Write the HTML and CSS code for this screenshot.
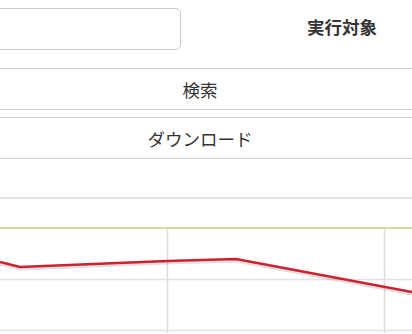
FILE: index.html
```html
<!DOCTYPE html>
<html lang="ja">
<head>
<meta charset="utf-8">
<link rel="stylesheet" href="styles.css">
</head>
<body>
<div class="page">
  <div class="row-top">
    <div class="input-wrap"><input class="text-input" type="text"></div>
    <div class="label">実行対象</div>
  </div>
  <div class="btn btn-search">検索</div>
  <div class="btn btn-download">ダウンロード</div>
  <div class="spacer"></div>
  <div class="spacer2"></div>
  <div class="chart">
    <svg width="412" height="106" viewBox="0 0 412 106">
      <line x1="0" y1="1" x2="412" y2="1" stroke="#d8d8a2" stroke-width="2"/>
      <line x1="0" y1="52.5" x2="412" y2="52.5" stroke="#e2e2e2" stroke-width="1.5"/>
      <line x1="0" y1="103.5" x2="412" y2="103.5" stroke="#e2e2e2" stroke-width="1.5"/>
      <line x1="167.5" y1="2" x2="167.5" y2="106" stroke="#dcdcdc" stroke-width="1.5"/>
      <line x1="384.5" y1="2" x2="384.5" y2="106" stroke="#dcdcdc" stroke-width="1.5"/>
      <polyline points="0,37 20,42 167,36 236,34 412,67" fill="none" stroke="rgba(0,0,0,0.12)" stroke-width="3"/>
      <polyline points="0,35 20,40 167,34 236,32 412,65" fill="none" stroke="#d0202f" stroke-width="2.5"/>
    </svg>
  </div>
</div>
</body>
</html>
```
FILE: styles.css
```css
html, body {
  margin: 0;
  padding: 0;
  background: #fff;
}
.page {
  width: 412px;
  height: 334px;
  overflow: hidden;
  font-family: "Noto Sans CJK JP", "Noto Sans", sans-serif;
  color: #333;
}
.row-top {
  display: flex;
  align-items: flex-start;
  height: 68px;
  border-bottom: 1px solid #cfcfcf;
}
.input-wrap {
  width: 181px;
  padding-top: 8px;
  overflow: visible;
}
.text-input {
  display: block;
  box-sizing: border-box;
  margin-left: -20px;
  width: 201px;
  height: 42px;
  border: 1px solid #cccccc;
  border-radius: 5px;
  background: #fff;
  outline: none;
}
.label {
  flex: 1;
  padding-left: 126px;
  padding-top: 14px;
  font-size: 17.5px;
  font-weight: bold;
  line-height: 26px;
  color: #333;
  white-space: nowrap;
}
.btn {
  height: 40px;
  display: flex;
  align-items: center;
  justify-content: center;
  padding-right: 12px;
  font-size: 17.5px;
  border-bottom: 1px solid #cfcfcf;
  color: #333;
}
.btn-search {
  height: 40px;
  margin-bottom: 7px;
}
.btn-download {
  border-top: 1px solid #cfcfcf;
  height: 40px;
}
.spacer {
  height: 38px;
  border-bottom: 2px solid #e2e2e2;
}
.spacer2 {
  height: 28px;
}
.chart {
  height: 106px;
}
.chart svg {
  display: block;
}
```
